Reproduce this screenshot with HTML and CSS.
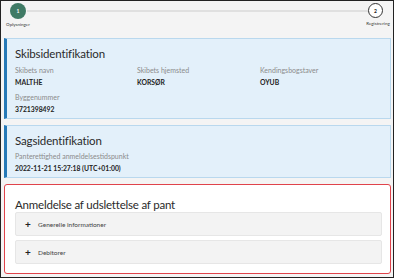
FILE: index.html
```html
<!DOCTYPE html>
<html lang="da">
<head>
<meta charset="utf-8">
<link rel="stylesheet" href="styles.css">
</head>
<body>
<div class="frame">
  <div class="stepper">
    <div class="step">
      <div class="dot dot-active">1</div>
      <div class="step-label">Oplysninger</div>
    </div>
    <div class="step-line"></div>
    <div class="step">
      <div class="dot dot-next">2</div>
      <div class="step-label">Registrering</div>
    </div>
  </div>

  <section class="card card-info">
    <h2 class="card-title">Skibsidentifikation</h2>
    <div class="fields">
      <div class="field">
        <div class="label">Skibets navn</div>
        <div class="value">MALTHE</div>
      </div>
      <div class="field">
        <div class="label">Skibets hjemsted</div>
        <div class="value">KORSØR</div>
      </div>
      <div class="field">
        <div class="label">Kendingsbogstaver</div>
        <div class="value">OYUB</div>
      </div>
      <div class="field">
        <div class="label">Byggenummer</div>
        <div class="value">3721398492</div>
      </div>
    </div>
  </section>

  <section class="card card-info">
    <h2 class="card-title">Sagsidentifikation</h2>
    <div class="fields">
      <div class="field field-wide">
        <div class="label">Panterettighed anmeldelsestidspunkt</div>
        <div class="value">2022-11-21 15:27:18 (UTC+01:00)</div>
      </div>
    </div>
  </section>

  <section class="card card-error">
    <h2 class="card-title card-title-lg">Anmeldelse af udslettelse af pant</h2>
    <div class="accordion">
      <div class="acc-item"><span class="plus">+</span><span class="acc-text">Generelle informationer</span></div>
      <div class="acc-item"><span class="plus">+</span><span class="acc-text">Debitorer</span></div>
    </div>
  </section>
</div>
</body>
</html>
```

FILE: styles.css
```css
* { box-sizing: border-box; }
html, body { margin: 0; padding: 0; }
body {
  font-family: "Lato", "Open Sans", sans-serif;
  background: #f4f4f4;
  color: #222;
}
.frame {
  width: 394px;
  height: 278px;
  border: 1px solid #222;
  padding: 2px 2px 0 3px;
  overflow: hidden;
  background: #f4f4f4;
}
.stepper {
  display: flex;
  align-items: flex-start;
  height: 35px;
  padding: 0 0 0 1px;
}
.step {
  display: flex;
  flex-direction: column;
  align-items: center;
  width: 26px;
}
.dot {
  width: 16px;
  height: 16px;
  border-radius: 50%;
  display: flex;
  align-items: center;
  justify-content: center;
  font-size: 5px;
  font-weight: 700;
}
.dot-active { background: #3f7a65; color: #fff; }
.dot-next { background: #fff; border: 1px solid #333; color: #222; width: 15px; height: 15px; margin-right: 5px; }
.step-label {
  font-size: 4.5px;
  color: #333;
  margin-top: 3px;
  white-space: nowrap;
}
.step-line {
  flex: 1;
  height: 2px;
  background: #e0e0e0;
  margin: 7px -4px 0;
}
.card {
  margin: 0 0 6px 0;
}
.card-info {
  background: #e3f0fa;
  border: 1px solid #b9d8ee;
  border-left: 3px solid #2679b7;
  padding: 8px 10px 3px 8px;
}
.card-title {
  margin: 0;
  font-weight: 400;
  font-size: 11.5px;
  line-height: 14px;
  letter-spacing: -0.15px;
  color: #2a2a2a;
}
.fields {
  display: grid;
  grid-template-columns: 122px 123px 1fr;
  row-gap: 4px;
  margin-top: 3.5px;
}
.field-wide { grid-column: 1 / 3; }
.label {
  font-size: 7px;
  color: #8b8b8b;
  line-height: 11px;
}
.value {
  font-size: 6.8px;
  font-weight: 700;
  color: #222;
  line-height: 12px;
}
.card-error {
  background: #fff;
  border: 1.5px solid #e0434b;
  border-radius: 3px;
  padding: 13px 8px 10px 10px;
  height: 90px;
}
.card-title-lg { font-size: 11.5px; line-height: 14px; letter-spacing: -0.2px; margin-bottom: 0; }
.accordion { display: flex; flex-direction: column; gap: 4px; }
.acc-item {
  background: #f3f3f3;
  border: 1px solid #e6e6e6;
  border-radius: 2px;
  height: 24px;
  display: flex;
  align-items: center;
  padding-left: 9px;
}
.plus { font-size: 10px; font-weight: 700; width: 13px; color: #222; }
.acc-text { font-size: 6.5px; color: #444; }
```
